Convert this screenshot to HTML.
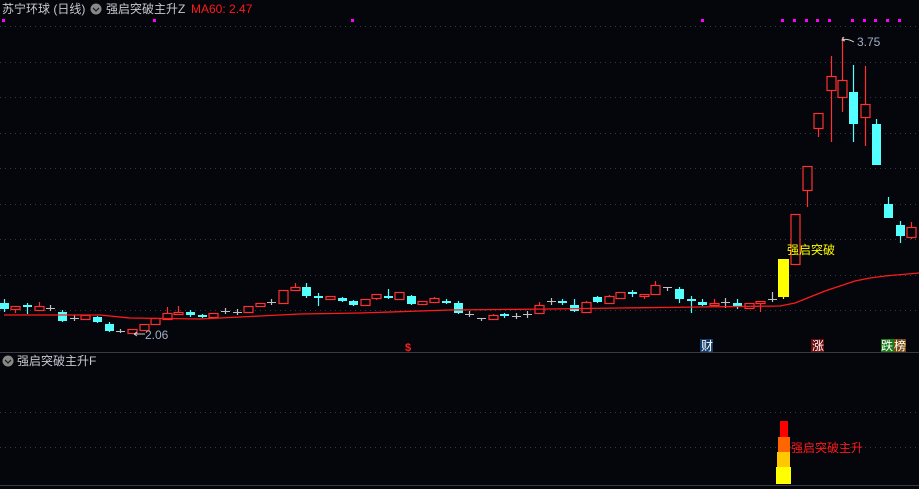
<!DOCTYPE html>
<html><head><meta charset="utf-8"><style>
html,body{margin:0;padding:0;background:#05050c;width:919px;height:489px;overflow:hidden;font-family:"Liberation Sans","Noto Sans CJK SC",sans-serif}
svg{position:absolute;left:0;top:0}
</style></head><body>
<svg id="s" width="919" height="489" xmlns="http://www.w3.org/2000/svg" font-family="Liberation Sans, Noto Sans CJK SC, sans-serif">
<g stroke="#3a3a44" stroke-dasharray="1,4" stroke-width="1">
<line x1="0" y1="26.5" x2="919" y2="26.5"/><line x1="0" y1="62.5" x2="919" y2="62.5"/>
<line x1="0" y1="97.5" x2="919" y2="97.5"/><line x1="0" y1="133.5" x2="919" y2="133.5"/>
<line x1="0" y1="168.5" x2="919" y2="168.5"/><line x1="0" y1="204.5" x2="919" y2="204.5"/>
<line x1="0" y1="239.5" x2="919" y2="239.5"/><line x1="0" y1="275.5" x2="919" y2="275.5"/>
<line x1="0" y1="310.5" x2="919" y2="310.5"/>
<line x1="0" y1="412.5" x2="919" y2="412.5"/><line x1="0" y1="447.5" x2="919" y2="447.5"/>
</g>
<line x1="0" y1="352.5" x2="919" y2="352.5" stroke="#3a3a44"/>
<line x1="0" y1="485.5" x2="919" y2="485.5" stroke="#3a3a44"/>
<g fill="#ff00ff">
<rect x="2" y="19" width="3" height="3"/><rect x="153" y="19" width="3" height="3"/><rect x="351" y="19" width="3" height="3"/>
<rect x="701" y="19" width="3" height="3"/><rect x="781" y="19" width="3" height="3"/><rect x="793" y="19" width="3" height="3"/>
<rect x="805" y="19" width="3" height="3"/><rect x="816" y="19" width="3" height="3"/><rect x="828" y="19" width="3" height="3"/>
<rect x="851" y="19" width="3" height="3"/><rect x="863" y="19" width="3" height="3"/><rect x="874" y="19" width="3" height="3"/>
<rect x="886" y="19" width="3" height="3"/><rect x="898" y="19" width="3" height="3"/>
</g>
<text x="2" y="13" font-size="12" fill="#c8c8d0">苏宁环球 (日线)</text>
<circle cx="96" cy="9" r="5.5" fill="#888"/><path d="M93 8l3 3 3-3" stroke="#222" fill="none" stroke-width="1.3"/>
<text x="106" y="13" font-size="12" fill="#c8c8d0">强启突破主升Z</text>
<text x="191" y="13" font-size="12" fill="#ff1a1a">MA60: 2.47</text>
<circle cx="8" cy="361" r="5.5" fill="#888"/><path d="M5 360l3 3 3-3" stroke="#222" fill="none" stroke-width="1.3"/>
<text x="17" y="365" font-size="12" fill="#c8c8d0">强启突破主升F</text>
<g id="c"></g>
<polyline fill="none" stroke="#ff1a1a" stroke-width="1.3" points="4,315 100,315 130,318 200,319 260,316 300,314 360,313 450,310 550,309 620,308 700,307 780,306 795,303 810,297 825,291 840,286 855,281 870,278 885,276 919,273"/>
<text x="787" y="254" font-size="12" fill="#ffff00">强启突破</text>
<text x="857" y="46" font-size="12" fill="#a0b0c0">3.75</text>
<path d="M844 37l-2 3 3 1M842 40q5 -2 12 2" stroke="#ccc" fill="none"/>
<text x="145" y="339" font-size="12" fill="#a0b0c0">2.06</text>
<path d="M134 334h11M134 334l3-2M134 334l3 2" stroke="#ccc" fill="none"/>
<text x="405" y="351" font-size="11" fill="#ff2020" font-weight="bold">$</text>
<rect x="700" y="339" width="13" height="13" fill="#143a6a"/><text x="701" y="350" font-size="12" fill="#fff">财</text>
<rect x="811" y="339" width="13" height="13" fill="#6a0a0a"/><text x="812" y="350" font-size="12" fill="#fff">涨</text>
<rect x="881" y="339" width="13" height="13" fill="#1a7a1a"/><text x="881" y="350" font-size="12" fill="#fff">跌</text>
<rect x="894" y="339" width="12" height="13" fill="#7a4a10"/><text x="894" y="350" font-size="12" fill="#fff">榜</text>
<rect x="780" y="421" width="8" height="16" fill="#ff0000"/>
<rect x="778" y="437" width="12" height="15" fill="#ff6600"/>
<rect x="777" y="452" width="13" height="15" fill="#ffc800"/>
<rect x="776" y="467" width="15" height="17" fill="#ffff00"/>
<text x="791" y="452" font-size="12" fill="#ff1a1a">强启突破主升</text>
</svg>
<script>
var D=[[4,'c',303,309,299,312],[15,'r',306,309,306,313],[27,'c',305,307,303,314],[39,'r',306,310,302,310],[50,'w',308,308,305,311],[62,'c',312,321,310,322],[74,'w',318,318,315,321],[85,'r',315,319,315,319],[97,'c',317,322,316,323],[109,'c',324,331,322,332],[120,'w',331,331,329,333],[132,'r',329,333,329,334],[144,'r',324,330,324,330],[155,'r',318,324,318,324],[167,'r',313,319,307,319],[178,'r',312,314,306,314],[190,'c',312,315,310,317],[202,'c',315,316,314,318],[213,'r',313,317,313,317],[225,'w',311,311,308,314],[237,'w',312,312,309,315],[248,'r',306,312,306,312],[260,'r',303,306,303,307],[271,'w',302,302,299,305],[283,'r',290,303,290,303],[295,'r',287,290,283,290],[306,'c',287,296,283,298],[318,'c',296,297,293,306],[330,'r',296,299,296,300],[342,'c',298,301,297,302],[353,'c',301,305,300,306],[365,'r',299,305,299,305],[376,'r',294,298,294,300],[388,'c',296,297,289,299],[399,'r',292,299,292,300],[411,'c',296,304,295,305],[422,'r',301,304,301,304],[434,'r',298,302,297,302],[446,'c',301,303,299,304],[458,'c',303,313,301,314],[469,'w',314,314,311,317],[481,'w',318,318,318,321],[493,'r',315,319,314,319],[504,'c',314,316,313,318],[516,'w',316,316,313,319],[527,'w',314,314,311,318],[539,'r',305,313,302,314],[551,'w',301,301,298,305],[562,'c',301,303,299,305],[574,'c',305,311,299,312],[586,'r',302,312,301,313],[597,'c',297,302,296,303],[609,'r',296,303,295,304],[620,'r',292,298,292,298],[632,'c',292,294,290,297],[644,'r',294,296,294,299],[655,'r',285,294,281,295],[667,'w',287,287,287,291],[679,'c',289,299,287,303],[691,'c',299,301,296,313],[702,'c',302,305,299,306],[714,'r',303,305,299,306],[725,'w',302,302,298,308],[737,'c',303,307,299,309],[749,'r',303,308,303,309],[760,'r',301,303,301,312],[772,'w',299,299,292,302],[783,'y',259,297,259,299],[795,'r',214,264,214,264],[807,'r',166,190,166,207],[818,'r',113,128,113,137],[831,'r',76,90,56,142],[842,'r',80,97,37,112],[853,'c',92,124,65,142],[865,'r',104,117,66,146],[876,'c',124,165,119,165],[888,'c',204,218,197,218],[900,'c',225,236,221,243],[911,'r',227,237,222,239]];
var h='',col={r:'#ff3030',c:'#54ffff',w:'#c0c0c0',y:'#ffff00'};
D.forEach(function(d){var x=d[0],t=d[1],c=col[t],w=t=='w'?8:(t=='y'?11:9);
h+='<line x1="'+(x+.5)+'" y1="'+d[4]+'" x2="'+(x+.5)+'" y2="'+d[5]+'" stroke="'+c+'" stroke-width="1.2"/>';
if(t=='w'){h+='<line x1="'+(x-4)+'" y1="'+(d[2]+.5)+'" x2="'+(x+5)+'" y2="'+(d[2]+.5)+'" stroke="'+c+'"/>';}
else if(t=='r'){h+='<rect x="'+(x-4)+'" y="'+(d[2]+.5)+'" width="'+w+'" height="'+Math.max(1,d[3]-d[2])+'" fill="#05050c" stroke="'+c+'" stroke-width="1.2"/>';}
else{h+='<rect x="'+(x-w/2+.5)+'" y="'+d[2]+'" width="'+w+'" height="'+Math.max(2,d[3]-d[2])+'" fill="'+c+'"/>';}});
document.getElementById('c').innerHTML=h;
</script>
</body></html>
